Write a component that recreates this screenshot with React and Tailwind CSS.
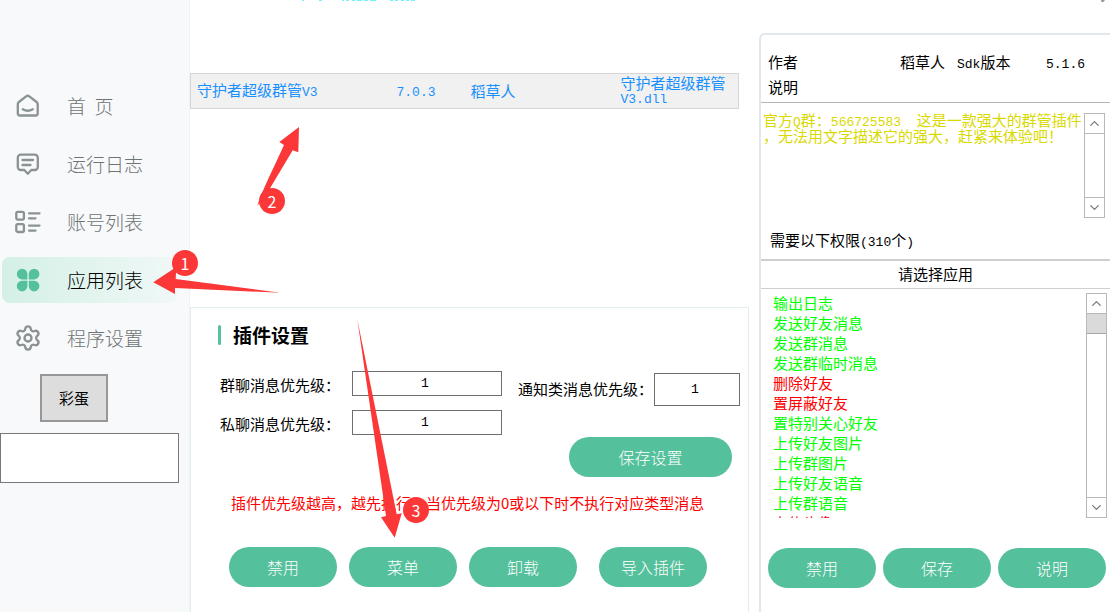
import React, { useState } from "react";
import clsx from "clsx";
import { ChevronDown, ChevronUp, Settings } from "lucide-react";

const HomeIcon = () => (
  <svg viewBox="0 0 24 24" className="size-6" fill="none" stroke="#8a9391" strokeWidth="2.3" strokeLinecap="round">
    <path d="M1.8 10.2c0-.9.4-1.7 1.1-2.2l7.2-5.6a2.6 2.6 0 0 1 3.2 0L20.6 8c.7.5 1.1 1.3 1.1 2.2v9.3a2 2 0 0 1-2 2H3.800a2 2 0 0 1-2-2z" />
    <path d="M6.800 15.300c3 1.800 6.900 1.800 9.900 0" />
  </svg>
);

const LogIcon = () => (
  <svg viewBox="0 0 24 24" className="size-6" fill="none" stroke="#8a9391" strokeWidth="2.3" strokeLinecap="round" strokeLinejoin="round">
    <path d="M4.800 2.700h14a3 3 0 0 1 3 3v9.300a3 3 0 0 1-3 3h-3.500l-3.500 3.700-3.500-3.700H4.800a3 3 0 0 1-3-3V5.700a3 3 0 0 1 3-3z" />
    <path d="M6.500 8h10.500M6.500 13h8" />
  </svg>
);

const AccountIcon = () => (
  <svg viewBox="0 0 24 24" className="size-6 overflow-visible" fill="none" stroke="#8a9391" strokeWidth="2.3" strokeLinecap="round">
    <rect x="0.300" y="1.800" width="7.600" height="7.800" rx="1.500" />
    <rect x="0.300" y="14.200" width="7.600" height="7.800" rx="1.500" />
    <path d="M13 3.300h10.500M13 8.300h6.500M13 15.600h10.500M13 20.600h6.500" />
  </svg>
);

const AppsIcon = () => (
  <svg viewBox="0 0 24 24" className="size-6" fill="#55c09c">
    <path d="M11.400 11.400H6.100a5.300 5.300 0 1 1 5.300-5.300z" />
    <path d="M12.800 11.400V6.100a5.300 5.300 0 1 1 5.300 5.300z" />
    <path d="M11.400 12.800v5.300a5.300 5.300 0 1 1-5.300-5.300z" />
    <path d="M12.800 12.800h5.300a5.300 5.300 0 1 1-5.300 5.300z" />
  </svg>
);

const GearIcon = () => <Settings size={28} strokeWidth={2} color="#8a9391" className="-mx-0.5" />;

const NAV_ITEMS = [
  { id: "home", label: "首  页", Icon: HomeIcon },
  { id: "logs", label: "运行日志", Icon: LogIcon },
  { id: "accounts", label: "账号列表", Icon: AccountIcon },
  { id: "apps", label: "应用列表", Icon: AppsIcon },
  { id: "settings", label: "程序设置", Icon: GearIcon },
];

const PERMISSIONS = [
  { name: "输出日志" },
  { name: "发送好友消息" },
  { name: "发送群消息" },
  { name: "发送群临时消息" },
  { name: "删除好友", risky: true },
  { name: "置屏蔽好友", risky: true },
  { name: "置特别关心好友" },
  { name: "上传好友图片" },
  { name: "上传群图片" },
  { name: "上传好友语音" },
  { name: "上传群语音" },
  { name: "上传头像", risky: true },
];

// Half-width characters
const Mono = ({ children }) => (
  <span className="font-['Liberation_Mono',monospace] text-[13px] leading-none whitespace-pre">{children}</span>
);

const PillButton = ({ children, className }) => (
  <button
    type="button"
    className={clsx(
      "h-10 shrink-0 cursor-pointer rounded-full bg-[#55c09c] text-base font-light text-white hover:bg-[#4bb28f]",
      className || "w-[108px]"
    )}
  >
    {children}
  </button>
);

const ScrollBar = ({ thumb }) => (
  <div className="flex w-[21px] shrink-0 flex-col border border-[#b8b8b8] bg-white text-[#777]">
    <button type="button" aria-label="向上滚动" className="flex h-5 items-center justify-center border-b border-[#b8b8b8]">
      <ChevronUp size={15} />
    </button>
    {thumb && <div className="h-5 border-b border-[#a8a8a8] bg-[#dadada]" />}
    <button type="button" aria-label="向下滚动" className="mt-auto flex h-5 items-center justify-center border-t border-[#b8b8b8]">
      <ChevronDown size={15} />
    </button>
  </div>
);

const PriorityInput = ({ id, className }) => (
  <input
    id={id}
    defaultValue="1"
    className={clsx(
      "border border-[#6e6e6e] bg-white pr-1 text-center font-['Liberation_Mono',monospace] text-[13px] outline-none",
      className
    )}
  />
);

const Sidebar = () => {
  const [active, setActive] = useState("apps");

  return (
    <aside className="w-[190px] shrink-0 border-r border-[#eef4f4] bg-[#f8f9fb] pt-[83px]">
      <nav className="flex flex-col gap-3 pr-3 pl-0.5">
        {NAV_ITEMS.map(({ id, label, Icon }) => (
          <button
            key={id}
            type="button"
            onClick={() => setActive(id)}
            className={clsx(
              "flex h-[46px] cursor-pointer items-center gap-[27px] rounded-lg pl-3.5 text-[19px] font-light whitespace-pre",
              active === id
                ? "bg-gradient-to-r from-[#d4f0e6] to-[#f0f8f7] text-black"
                : "text-[#6e7473]"
            )}
          >
            <Icon />
            {label}
          </button>
        ))}
      </nav>
      <button
        type="button"
        className="mt-[13px] ml-10 block h-12 w-[68px] cursor-pointer border-2 border-[#979797] bg-[#dddddd] text-[15px] text-black"
      >
        彩蛋
      </button>
      <input aria-label="彩蛋内容" className="mt-[11px] h-[50px] w-[179px] border border-[#777] bg-white px-2 outline-none" />
    </aside>
  );
};

const AppTable = () => (
  <div className="flex-1 pr-5">
    <table className="w-full table-fixed border-collapse border border-[#d6d6d6] bg-[#f1f1f1] text-left text-[15px] leading-[14px] text-[#1890ff]">
      <tbody>
        <tr className="h-[35px]">
          <td className="w-[200px] pl-1.5">
            守护者超级群管<Mono>V3</Mono>
          </td>
          <td className="w-[74px] pl-1.5">
            <Mono>7.0.3</Mono>
          </td>
          <td className="w-[150px] pl-1.5">稻草人</td>
          <td className="pl-1.5">
            守护者超级群管
            <br />
            <Mono>V3.dll</Mono>
          </td>
        </tr>
      </tbody>
    </table>
  </div>
);

const PluginSettings = () => (
  <section className="mr-2.5 border border-b-0 border-[#e3eeec] pt-[13px] pb-[25px]">
    <h2 className="ml-[27px] flex h-7 items-center gap-3 text-[19px] font-bold">
      <span className="h-5 w-[3px] rounded-sm bg-[#55c09c]" />
      插件设置
    </h2>

    <div className="mt-[22px] mr-2 ml-[29px] flex items-start justify-between">
      <div className="flex flex-col gap-3.5">
        <div className="flex h-[25px] items-center">
          <label htmlFor="group-priority" className="w-[132px] pt-1">群聊消息优先级：</label>
          <PriorityInput id="group-priority" className="h-[25px] w-[150px]" />
        </div>
        <div className="flex h-[25px] items-center">
          <label htmlFor="private-priority" className="w-[132px] pt-1">私聊消息优先级：</label>
          <PriorityInput id="private-priority" className="h-[25px] w-[150px]" />
        </div>
      </div>
      <div className="flex items-center pt-0.5">
        <label htmlFor="notice-priority" className="w-[136px]">通知类消息优先级：</label>
        <PriorityInput id="notice-priority" className="h-[33px] w-[86px]" />
      </div>
    </div>

    <div className="mt-0.5 mr-4 flex justify-end">
      <PillButton className="w-[163px]">保存设置</PillButton>
    </div>

    <p className="mt-4 ml-10 leading-5 whitespace-nowrap text-[#ff0000]">
      插件优先级越高，越先执行，当优先级为0或以下时不执行对应类型消息
    </p>

    <div className="mt-[34px] mr-[41px] ml-[38px] flex gap-3">
      <PillButton>禁用</PillButton>
      <PillButton>菜单</PillButton>
      <PillButton>卸载</PillButton>
      <div className="ml-auto">
        <PillButton>导入插件</PillButton>
      </div>
    </div>
  </section>
);

const AppDetails = () => (
  <aside className="mt-[33px] flex w-[351px] shrink-0 flex-col rounded-tl-md border-t-2 border-l-2 border-[#e0e8ee] pb-6">
    <dl className="grid grid-cols-[132px_57px_89px_auto] border-b border-[#b5b5b5] pt-3.5 pb-[3px] pl-[7px] leading-[25px]">
      <dt>作者</dt>
      <dd>稻草人</dd>
      <dt>
        <Mono>Sdk</Mono>版本
      </dt>
      <dd>
        <Mono>5.1.6</Mono>
      </dd>
      <dt>说明</dt>
    </dl>

    <div className="mt-2.5 mr-[5px] flex h-[105px] justify-between pl-0.5">
      <p className="leading-[14px] whitespace-nowrap text-[#d9d900]">
        官方<Mono>Q</Mono>群：<Mono>566725583  </Mono>这是一款强大的群管插件
        <br />
        ，无法用文字描述它的强大，赶紧来体验吧！
      </p>
      <ScrollBar />
    </div>

    <p className="mt-3 pb-[9px] pl-[9px] leading-5">
      需要以下权限<Mono>(310</Mono>个<Mono>)</Mono>
    </p>
    <h3 className="border-t-2 border-b border-[#cfcfcf] pb-0.5 text-center leading-[25px]">请选择应用</h3>

    <div className="mt-1 mr-[3px] flex min-h-[224px] flex-1 basis-0 justify-between overflow-hidden pl-3">
      <ul className="h-0 leading-5">
        {PERMISSIONS.map((item) => (
          <li key={item.name} className={item.risky ? "text-[#ff0000]" : "text-[#00ff00]"}>
            {item.name}
          </li>
        ))}
      </ul>
      <ScrollBar thumb />
    </div>

    <div className="mt-[30px] flex gap-[7px] pl-[7px]">
      <PillButton>禁用</PillButton>
      <PillButton>保存</PillButton>
      <PillButton>说明</PillButton>
    </div>
  </aside>
);

const StepBadge = ({ children, className }) => (
  <span
    className={clsx(
      "absolute flex size-[26px] items-center justify-center rounded-full bg-[#fb3737] text-base leading-none text-white",
      className
    )}
  >
    {children}
  </span>
);

// Numbered arrows that lie over the window
const Guide = () => (
  <div className="pointer-events-none absolute top-0 left-0">
    <svg width="1110" height="612" viewBox="0 0 1110 612" fill="#fb3737">
      <path d="M153.300 282.300 176.300 267l-.6 12L280 292.700l-105-4.700v6z" />
      <path d="M299 127l-.7 25.300-5.600-2L266 195l-8.700 10.700c5-16 18-41 26.700-60.700l-4.700-3z" />
      <path d="M357.300 319.300 396.700 514.300l5-1-7 24.400-13.700-20.400 5-1.300z" />
      <path
        d="M302 0h2M319 0h3M342 0h2M346 0h3M352 0h3M357 0h5M364 0h4M370 0h6M390 0h3M395 0h3M401 0h3M406 0h3M411 0h4"
        stroke="#6ff4fb"
        strokeWidth="2"
      />
      <path d="M1101 0h4l-1.500 2h-2z" fill="#999" />
    </svg>
    <StepBadge className="top-[250px] left-[172px]">1</StepBadge>
    <StepBadge className="top-[188px] left-[259px]">2</StepBadge>
    <StepBadge className="top-[497px] left-[403px]">3</StepBadge>
  </div>
);

const App = () => (
  <div className="relative flex min-h-screen overflow-hidden bg-white font-['Noto_Sans_CJK_SC',sans-serif] text-[15px] text-black">
    <Sidebar />
    <main className="flex min-w-0 flex-1 flex-col pt-[73px]">
      <AppTable />
      <PluginSettings />
    </main>
    <AppDetails />
    <Guide />
  </div>
);

export default App;
